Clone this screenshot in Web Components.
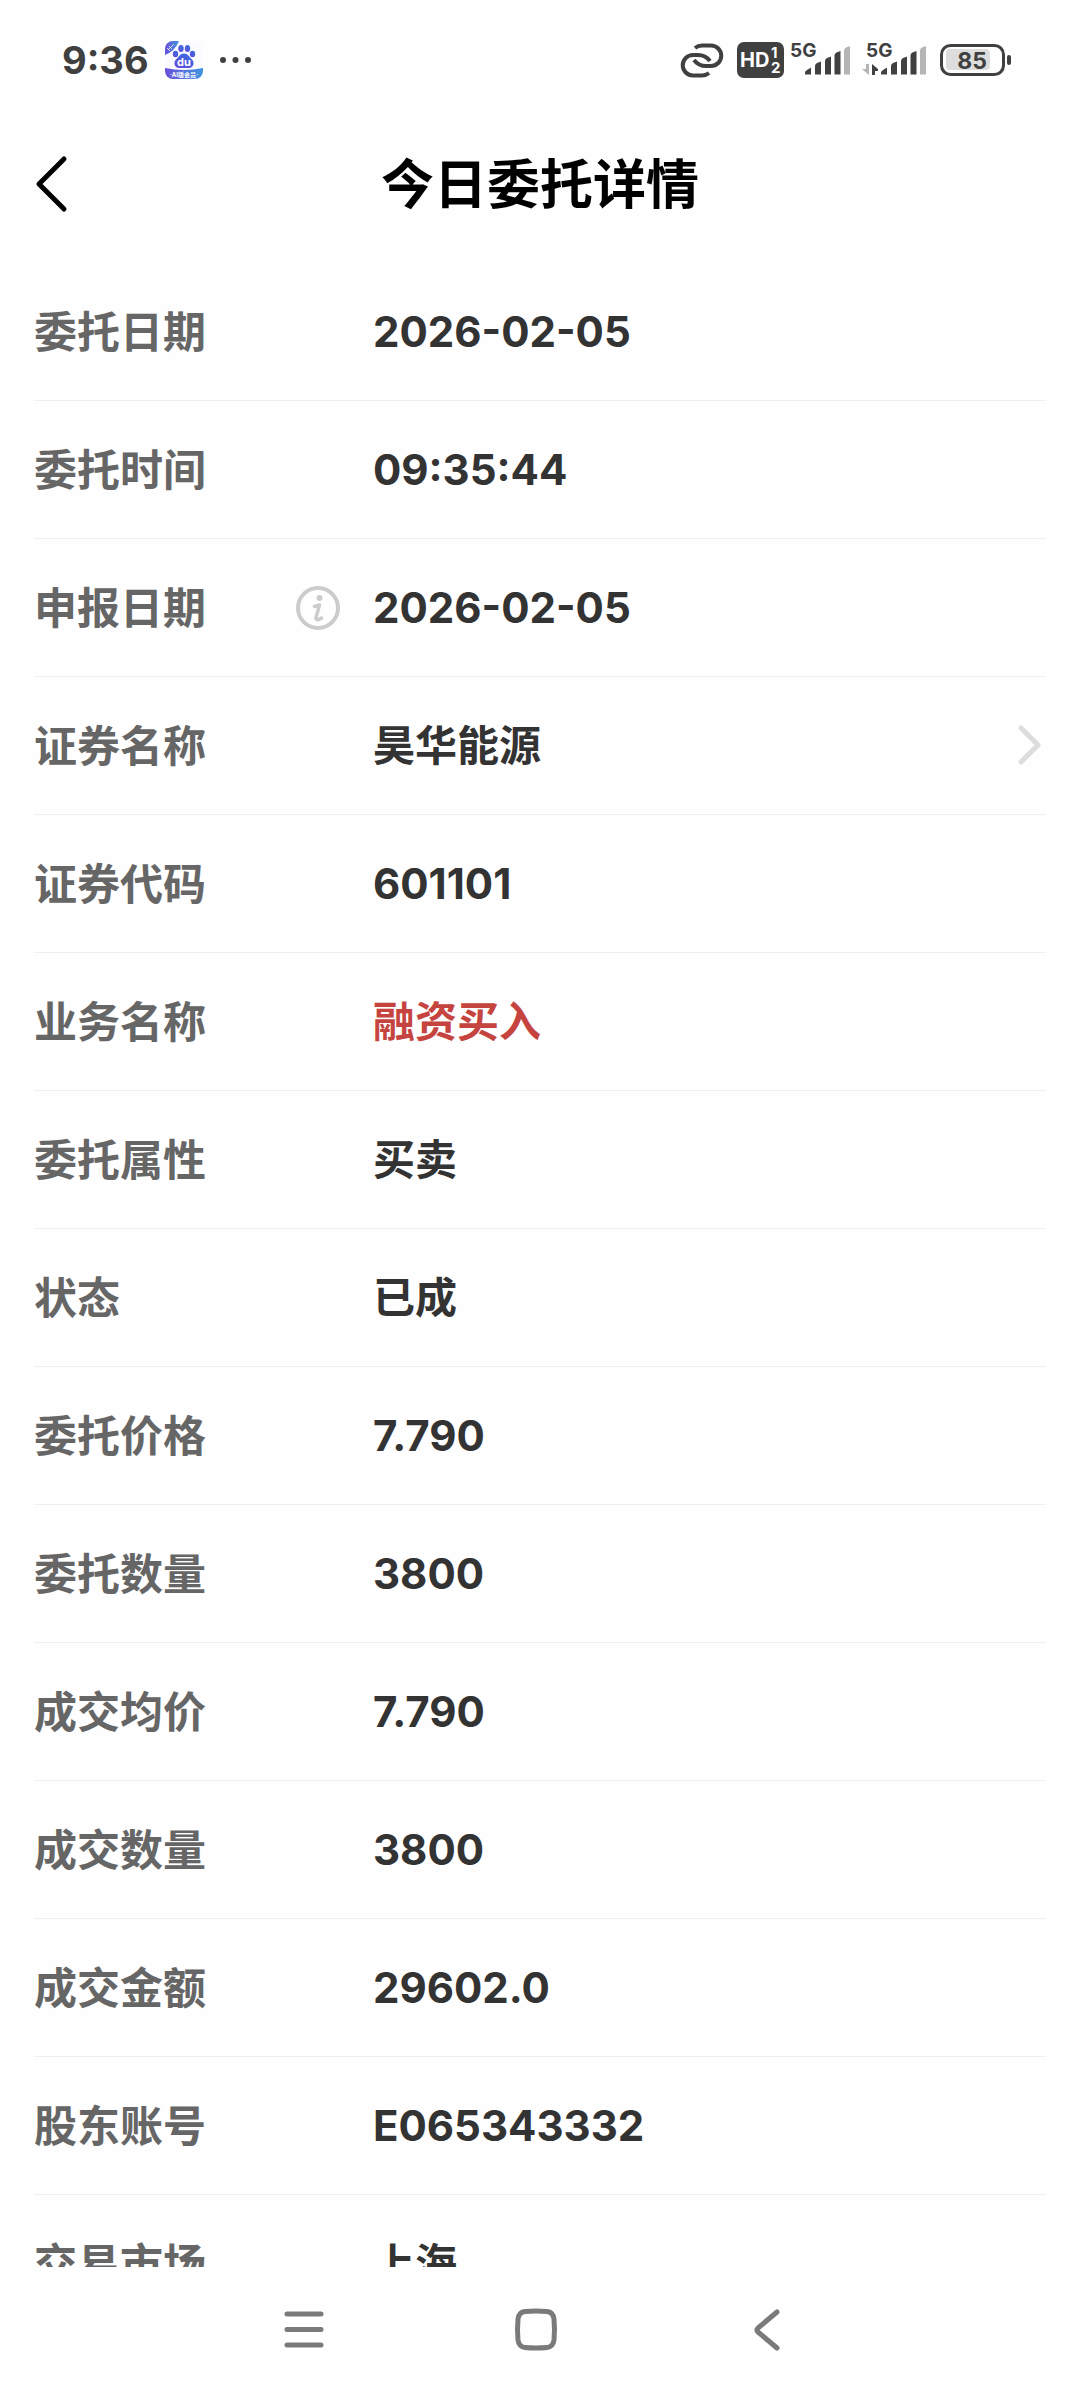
<!DOCTYPE html>
<html lang="zh-CN">
<head>
<meta charset="utf-8">
<meta name="viewport" content="width=device-width, initial-scale=1">
<title>今日委托详情</title>
<style>
  html, body { margin: 0; height: 100%; }
  body { background: #fefefe; color: #333; font-family: Inter, "Noto Sans CJK SC", sans-serif; }
</style>
</head>
<body>
<order-page></order-page>
<script>
function define(name, html) {
  const template = document.createElement('template');
  template.innerHTML = html;
  customElements.define(name, class extends HTMLElement {
    constructor() {
      super();
      this.attachShadow({ mode: 'open' }).append(template.content.cloneNode(true));
    }
  });
}

define('status-bar', `
<style>
  :host { display: flex; align-items: center; justify-content: space-between; height: 120px; padding: 0 68px 0 62px; color: #404040; }
  .group { display: flex; align-items: center; }
  time { font-size: 38px; font-weight: 700; line-height: 48px; }
  svg { display: block; flex: none; overflow: visible; }
  .left { gap: 16px; }
  .right { gap: 13px; }
  .network { gap: 6px; }
  text { font-family: Inter, "Noto Sans CJK SC", sans-serif; font-weight: 700; }
</style>
<div class="group left">
  <time>9:36</time>
  <svg width="38" height="38" viewBox="0 0 38 38" role="img" aria-label="百度">
    <defs>
      <linearGradient id="g" x1="0" x2="1"><stop offset="0" stop-color="#6a4fd8"/><stop offset="1" stop-color="#3f95e0"/></linearGradient>
      <linearGradient id="p" x1="0" x2="1" y1="1" y2="0"><stop offset="0" stop-color="#6a48dc"/><stop offset="1" stop-color="#2f72e0"/></linearGradient>
      <clipPath id="c"><rect width="38" height="38" rx="8"/></clipPath>
    </defs>
    <g clip-path="url(#c)">
      <rect width="38" height="38" fill="#fbfbff"/>
      <path d="M0 0H14Q10 10 0 14Z" fill="url(#g)"/>
      <path d="M3 9L9 3M4 5L7 8M2 7L5 10" stroke="#fff" stroke-opacity=".7"/>
      <path d="M0 27Q19 31 38 27V38H0Z" fill="url(#g)"/>
    </g>
    <g fill="url(#p)">
      <ellipse cx="10.500" cy="13" rx="2.700" ry="3.300"/><ellipse cx="16" cy="7.500" rx="2.700" ry="3.500"/>
      <ellipse cx="22.500" cy="7.500" rx="2.700" ry="3.500"/><ellipse cx="27.500" cy="13" rx="2.700" ry="3.300"/>
      <path d="M19 12.500C23 12.500 24 16 27 18.500C30 21.500 28.500 27 24 27H14C9.500 27 8 21.500 11 18.500C14 16 15 12.500 19 12.500Z"/>
    </g>
    <text x="19" y="25" font-size="11" text-anchor="middle" fill="#fff">du</text>
    <text x="19" y="36" font-size="6" text-anchor="middle" fill="#fff">·AI版会员·</text>
  </svg>
  <svg width="32" height="8" viewBox="0 0 32 8" fill="currentColor" aria-hidden="true"><circle cx="4" cy="4" r="3"/><circle cx="16.500" cy="4" r="3"/><circle cx="29" cy="4" r="3"/></svg>
</div>
<div class="group right">
  <svg width="44" height="35" viewBox="0 0 44 35" fill="none" stroke="currentColor" stroke-width="4" aria-hidden="true">
    <path d="M15 5Q18 2.500 22 2.500H31A10.250 10.250 0 0 1 31 23H26C21 23 17 21 14 17"/>
    <path d="M29 30Q26 32.500 22 32.500H13A10.250 10.250 0 0 1 13 12H18C23 12 27 14 30 18"/>
  </svg>
  <div class="group network">
    <svg width="47" height="36" viewBox="0 0 47 36" role="img" aria-label="HD">
      <rect width="47" height="36" rx="7" fill="currentColor"/>
      <text x="3" y="25" font-size="20" fill="#fff">HD</text>
      <text x="34" y="16" font-size="15" fill="#fff">1</text><text x="34" y="31" font-size="15" fill="#fff">2</text>
    </svg>
    <svg width="137" height="36" viewBox="0 0 137 36" fill="currentColor" role="img" aria-label="5G">
      <defs>
        <g id="bars">
          <path d="M15 31Q15 29 17 28L21 25.500V32.500H15Z"/>
          <path d="M25 24Q25 22 27 21L31 19.500V32.500H25Z"/>
          <path d="M35 19Q35 17 37 16L41 14.500V32.500H35Z"/>
          <path d="M44.500 13.500Q44.500 11.500 46.500 10.500L50.500 9V32.500H44.500Z"/>
          <path fill="#b5b5b5" d="M54 8.500Q54 6.500 56 5.500L60 4V32.500H54Z"/>
        </g>
      </defs>
      <text x="0" y="15" font-size="19">5G</text>
      <use href="#bars"/>
      <text x="76" y="15" font-size="19">5G</text>
      <use href="#bars" x="76"/>
      <path fill="#b5b5b5" d="M76 22H79V33L72 27H76Z"/>
      <path d="M82 33V22L88 27V29H85V33Z"/>
    </svg>
  </div>
  <svg width="72" height="32" viewBox="0 0 72 32" role="img" aria-label="85%">
    <rect x="1.500" y="1.500" width="62" height="29" rx="9" fill="none" stroke="currentColor" stroke-width="3"/>
    <rect x="6" y="5" width="44" height="21" rx="4" fill="#ddd"/>
    <rect x="67" y="11" width="4" height="10" rx="2" fill="currentColor"/>
    <text x="32" y="25" font-size="23" text-anchor="middle" fill="currentColor">85</text>
  </svg>
</div>`);

define('page-header', `
<style>
  :host { display: grid; grid-template-columns: 1fr auto 1fr; align-items: center; height: 128px; padding: 0 34px; color: #000; }
  button { width: 44px; height: 64px; padding: 0; border: 0; background: none; color: inherit; }
  svg { display: block; }
  h1 { margin: 0; padding-top: 2px; font-size: 53px; line-height: 72px; font-weight: 700; }
</style>
<button aria-label="返回"><svg width="36" height="64" viewBox="0 0 36 64" fill="none" stroke="currentColor" stroke-width="5" stroke-linecap="round" stroke-linejoin="round"><path d="M30 7L5 32L30 57"/></svg></button>
<h1><slot></slot></h1>`);

define('detail-row', `
<style>
  :host { display: flex; align-items: center; height: 137px; border-bottom: 1px solid #efefef; font-size: 43px; line-height: 60px; font-weight: 700; }
  .label { display: flex; align-items: center; justify-content: space-between; box-sizing: border-box; width: 339px; padding-right: 33px; color: #666; }
  .value { flex: 1; font-size: 42px; }
</style>
<div class="label"><slot name="label"></slot><slot name="hint"></slot></div>
<div class="value"><slot></slot></div>
<slot name="end"></slot>`);

define('info-button', `
<style>
  :host { display: block; }
  button { display: block; padding: 0; border: 0; background: none; color: #ccc; }
  svg { display: block; }
</style>
<button aria-label="说明"><svg width="44" height="44" viewBox="0 0 44 44" fill="none" stroke="currentColor" stroke-width="4" stroke-linecap="round" stroke-linejoin="round"><circle cx="22" cy="22" r="20"/><circle cx="23.500" cy="12" r="3" fill="currentColor" stroke="none"/><path d="M18.500 20.500L23.500 19L20 31.500Q20 35.500 25.500 32" stroke-width="3.500"/></svg></button>`);

define('row-link', `
<style>
  :host { display: block; padding-right: 4px; }
  a { display: block; color: #ddd; }
  svg { display: block; }
</style>
<a href="#security" aria-label="查看证券"><svg width="26" height="44" viewBox="0 0 26 44" fill="none" stroke="currentColor" stroke-width="5" stroke-linecap="round" stroke-linejoin="round"><path d="M5 4L22 21L5 38"/></svg></a>`);

define('system-nav', `
<style>
  :host { display: flex; align-items: center; justify-content: center; gap: 184px; height: 133px; padding: 0 8px 8px 0; box-sizing: border-box; color: #7a7a7a; }
  button { width: 48px; height: 48px; padding: 0; border: 0; background: none; color: inherit; }
  svg { display: block; fill: none; stroke: currentColor; stroke-width: 5; stroke-linecap: round; stroke-linejoin: round; }
</style>
<button aria-label="最近任务"><svg width="48" height="48" viewBox="0 0 48 48"><path d="M7 8H41M7 23.500H41M7 39H41"/></svg></button>
<button aria-label="主屏幕"><svg width="48" height="48" viewBox="0 0 48 48"><path d="M13 5.500Q24 4.500 35 5.500Q41 6 42 13Q43 23.500 42 34Q41 41 35 41.500Q24 42.500 13 41.500Q7 41 6 34Q5 23.500 6 13Q7 6 13 5.500Z"/></svg></button>
<button aria-label="后退"><svg width="48" height="48" viewBox="0 0 48 48"><path d="M33 6L14 22Q12 24 14 26L33 42"/></svg></button>`);

define('order-page', `
<style>
  :host { display: flex; flex-direction: column; height: 100vh; }
  status-bar, page-header, system-nav, detail-row { flex: none; }
  main { flex: 1; min-height: 0; overflow: hidden; padding: 15px 34px 0; }
  .buy { color: #c6443f; }
</style>
<status-bar></status-bar>
<page-header>今日委托详情</page-header>
<main>
  <detail-row><span slot="label">委托日期</span>2026-02-05</detail-row>
  <detail-row><span slot="label">委托时间</span>09:35:44</detail-row>
  <detail-row><span slot="label">申报日期</span><info-button slot="hint"></info-button>2026-02-05</detail-row>
  <detail-row><span slot="label">证券名称</span>昊华能源<row-link slot="end"></row-link></detail-row>
  <detail-row><span slot="label">证券代码</span>601101</detail-row>
  <detail-row><span slot="label">业务名称</span><span class="buy">融资买入</span></detail-row>
  <detail-row><span slot="label">委托属性</span>买卖</detail-row>
  <detail-row><span slot="label">状态</span>已成</detail-row>
  <detail-row><span slot="label">委托价格</span>7.790</detail-row>
  <detail-row><span slot="label">委托数量</span>3800</detail-row>
  <detail-row><span slot="label">成交均价</span>7.790</detail-row>
  <detail-row><span slot="label">成交数量</span>3800</detail-row>
  <detail-row><span slot="label">成交金额</span>29602.0</detail-row>
  <detail-row><span slot="label">股东账号</span>E065343332</detail-row>
  <detail-row><span slot="label">交易市场</span>上海</detail-row>
</main>
<system-nav></system-nav>`);
</script>
</body>
</html>
